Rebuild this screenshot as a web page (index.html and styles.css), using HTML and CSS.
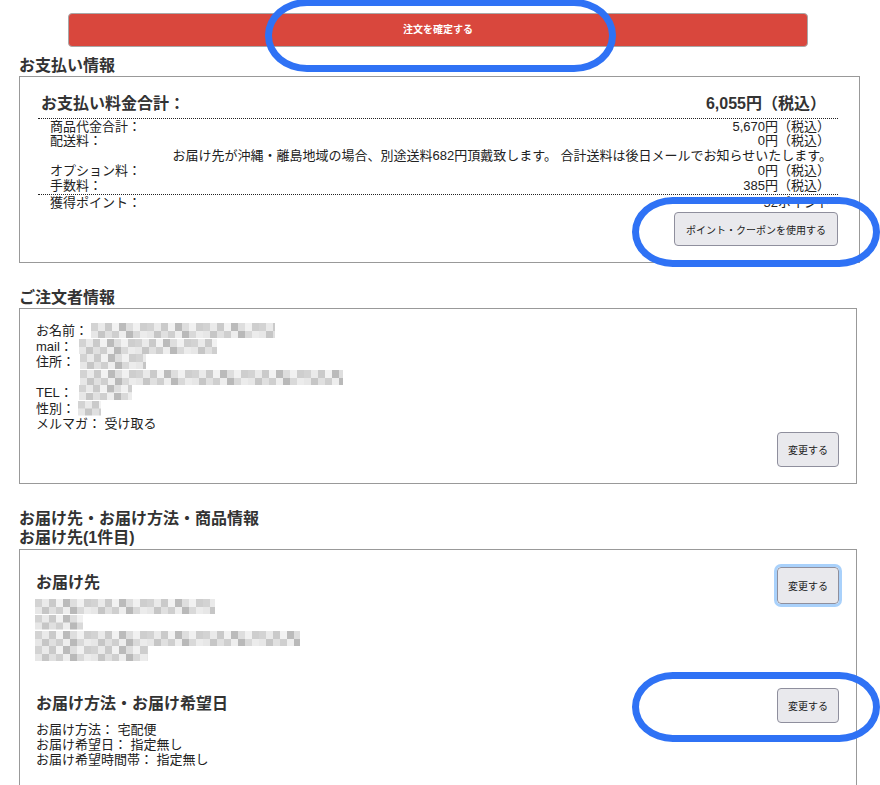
FILE: index.html
```html
<!DOCTYPE html>
<html lang="ja">
<head>
<meta charset="utf-8">
<title>ご注文内容の確認</title>
<link rel="stylesheet" href="styles.css">
</head>
<body>
<div class="page">
  <button class="confirm-btn">注文を確定する</button>

  <h2 class="sec-title first">お支払い情報</h2>
  <div class="box pay">
    <div class="total">
      <span>お支払い料金合計：</span>
      <span>6,055円（税込）</span>
    </div>
    <div class="rows">
      <div class="row"><span>商品代金合計：</span><span>5,670円（税込）</span></div>
      <div class="row"><span>配送料：</span><span>0円（税込）</span></div>
      <div class="row note">お届け先が沖縄・離島地域の場合、別途送料682円頂戴致します。 合計送料は後日メールでお知らせいたします。</div>
      <div class="row"><span>オプション料：</span><span>0円（税込）</span></div>
      <div class="row"><span>手数料：</span><span>385円（税込）</span></div>
    </div>
    <div class="row points"><span>獲得ポイント：</span><span>52ポイント</span></div>
    <div class="actions">
      <button class="btn wide">ポイント・クーポンを使用する</button>
    </div>
  </div>

  <h2 class="sec-title second">ご注文者情報</h2>
  <div class="box narrow customer">
    <div class="line">お名前：<span class="mz mz-name"></span></div>
    <div class="line">mail：<span class="mz mz-mail"></span></div>
    <div class="line">住所：<span class="mz mz-zip"></span></div>
    <div class="line indent"><span class="mz mz-addr"></span></div>
    <div class="line">TEL：<span class="mz mz-tel"></span></div>
    <div class="line">性別：<span class="mz mz-sex"></span></div>
    <div class="line">メルマガ： 受け取る</div>
    <div class="actions">
      <button class="btn">変更する</button>
    </div>
  </div>

  <h2 class="sec-title third">お届け先・お届け方法・商品情報<br>お届け先(1件目)</h2>
  <div class="box narrow delivery">
    <div class="part">
      <button class="btn float focused">変更する</button>
      <h3 class="part-title">お届け先</h3>
      <div class="addr">
        <div class="aline"><span class="mz mz-a1"></span></div>
        <div class="aline"><span class="mz mz-a2"></span></div>
        <div class="aline"><span class="mz mz-a3"></span></div>
        <div class="aline"><span class="mz mz-a4"></span></div>
      </div>
    </div>
    <div class="part method">
      <button class="btn float">変更する</button>
      <h3 class="part-title">お届け方法・お届け希望日</h3>
      <div class="mline">お届け方法： 宅配便</div>
      <div class="mline">お届け希望日： 指定無し</div>
      <div class="mline">お届け希望時間帯： 指定無し</div>
    </div>
  </div>

  <div class="mark mark-confirm"></div>
  <div class="mark mark-coupon"></div>
  <div class="mark mark-method"></div>
</div>
</body>
</html>
```
FILE: styles.css
```css
html, body {
  margin: 0;
  padding: 0;
  background: #fff;
  overflow: hidden;
}
body {
  font-family: "Liberation Sans", "Noto Sans CJK JP", sans-serif;
  color: #222;
  font-size: 13px;
}
.page {
  position: relative;
  width: 841px;
  padding: 13px 0 0 19px;
}
button {
  font-family: "Liberation Sans", "Noto Sans CJK JP", sans-serif;
  cursor: pointer;
}
.confirm-btn {
  display: block;
  width: 740px;
  height: 34px;
  margin-left: 49px;
  background: #d9473d;
  color: #fff;
  border: 1px solid #a8a8a8;
  border-radius: 4px;
  font-size: 10px;
  font-weight: bold;
  line-height: 32px;
  padding: 0;
}
.sec-title {
  margin: 0;
  font-size: 16px;
  font-weight: bold;
  line-height: 19px;
  color: #333;
}
.sec-title.first { margin-top: 8.5px; margin-bottom: 1.5px; }
.sec-title.second { margin-top: 24.5px; margin-bottom: 1.5px; }
.sec-title.third { margin-top: 25px; margin-bottom: 1.5px; }
.box {
  border: 1px solid #999;
  box-sizing: border-box;
}
.box.narrow { width: 838px; }

/* payment */
.pay {
  width: 841px;
  padding: 15px 21px 16px 18px;
}
.total {
  display: flex;
  justify-content: space-between;
  font-size: 16px;
  font-weight: bold;
  line-height: 24px;
  padding: 0 12px 2px 3px;
  border-bottom: 1px dotted #222;
  color: #333;
}
.rows {
  padding-top: 0.5px;
  border-bottom: 1px dotted #222;
  padding-bottom: 1px;
}
.row {
  display: flex;
  justify-content: space-between;
  line-height: 14.75px;
  padding: 0 8px 0 12px;
}
.row.note {
  justify-content: flex-end;
  padding-right: 6px;
}
.row.points { padding-top: 0.5px; }
.actions {
  display: flex;
  justify-content: flex-end;
}
.pay .actions { margin-top: 1.5px; padding-right: 0; }
.btn {
  height: 35px;
  padding: 0 10px;
  background: #e9e9ed;
  border: 1px solid #8f8f9d;
  border-radius: 4px;
  font-size: 10px;
  color: #222;
}
.btn.wide {
  height: 34px;
  padding: 0 11px;
  width: 164px;
}

/* customer */
.customer {
  padding: 14px 17px 16px 16px;
}
.line {
  line-height: 15.5px;
  height: 15.5px;
  white-space: nowrap;
}
.line.indent { padding-left: 44px; }
.customer .actions { margin-top: 0.5px; }
.customer .btn { width: 62px; }

.mz {
  display: inline-block;
  vertical-align: top;
  margin-left: 6px;
  height: 15px;
  background:
    linear-gradient(90deg, #c9c9c9 0 7px, #e6e6e6 7px 14px, #bdbdbd 14px 21px, #f0f0f0 21px 28px, #ababab 28px 35px, #d6d6d6 35px 42px, #eeeeee 42px 49px, #c2c2c2 49px 56px) 0 0 / 56px 50% repeat-x,
    linear-gradient(90deg, #e2e2e2 0 7px, #b8b8b8 7px 14px, #d9d9d9 14px 21px, #c4c4c4 21px 28px, #eaeaea 28px 35px, #a8a8a8 35px 42px, #d0d0d0 42px 49px, #e8e8e8 49px 56px) 0 100% / 56px 50% repeat-x;
  opacity: 0.8;
}
.mz-name { width: 184px; margin-left: 3px; }
.mz-mail { width: 138px; margin-left: 6px; }
.mz-zip { width: 66px; margin-left: 5px; }
.mz-addr { width: 263px; margin-left: 0; }
.mz-tel { width: 53px; margin-left: 6px; }
.mz-sex { width: 23px; margin-left: 3px; }

/* delivery */
.delivery {
  padding: 17px 17px 20px 16px;
  height: 260px;
}
.part { display: flow-root; }
.float { float: right; width: 62px; }
.btn.focused {
  height: 37px;
  outline: 3px solid #a9d1fb;
  outline-offset: 0;
}
.part-title {
  margin: 6.5px 0 0 0;
  font-size: 16px;
  font-weight: bold;
  line-height: 19px;
  color: #333;
}
.addr {
  margin-top: 7px;
  margin-left: -1px;
}
.aline { height: 15.75px; }
.aline .mz { margin-left: 0; height: 15px; }
.mz-a1 { width: 180px; }
.mz-a2 { width: 48px; }
.mz-a3 { width: 265px; }
.mz-a4 { width: 113px; }
.method {
  clear: both;
  padding-top: 26px;
}
.method .part-title { margin-top: 5.5px; margin-bottom: 9px; }
.mline { line-height: 15px; }

/* annotation marks */
.mark {
  position: absolute;
  border: 7px solid #2f72f5;
  box-sizing: border-box;
  border-radius: 42px / 36px;
  pointer-events: none;
}
.mark-confirm {
  left: 265px;
  top: -1px;
  width: 351px;
  height: 73px;
}
.mark-coupon {
  left: 632px;
  top: 197px;
  width: 248px;
  height: 70px;
}
.mark-method {
  left: 632px;
  top: 672px;
  width: 248px;
  height: 70px;
}
```
